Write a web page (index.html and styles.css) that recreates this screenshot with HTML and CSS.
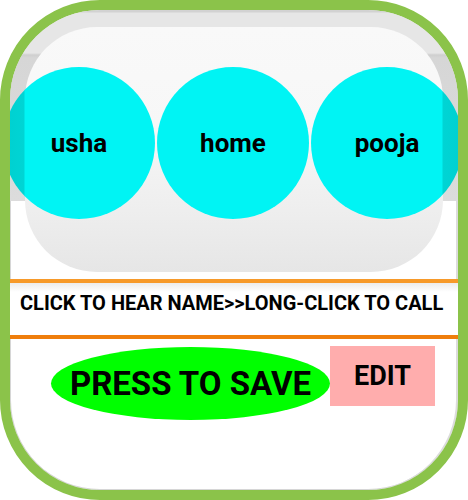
FILE: index.html
```html
<!DOCTYPE html>
<html>
<head>
<meta charset="utf-8">
<link rel="stylesheet" href="styles.css">
</head>
<body>
<div class="frame">
  <div class="list">
    <div class="shell"></div>
    <div class="pill"></div>
    <div class="row">
      <div class="circle circle-first">usha</div>
      <div class="circle">home</div>
      <div class="circle circle-last">pooja</div>
    </div>
  </div>
  <div class="band">CLICK TO HEAR NAME&gt;&gt;LONG-CLICK TO CALL</div>
  <div class="actions">
    <div class="save">PRESS TO SAVE</div>
    <div class="edit">EDIT</div>
  </div>
</div>
</body>
</html>
```

FILE: styles.css
```css
html, body {
  margin: 0;
  padding: 0;
  background: #ffffff;
}
body {
  width: 468px;
  height: 500px;
  font-family: Roboto, "Liberation Sans", sans-serif;
  color: #000;
}
.frame {
  box-sizing: border-box;
  width: 468px;
  height: 500px;
  border: 10px solid #8bc34a;
  border-radius: 100px;
  overflow: hidden;
  background: #ffffff;
  box-shadow: inset 1px 0 0 #d6d6d6, inset -2px 0 0 #dcdcdc, inset 0 -1px 0 #d6d6d6;
}
.list {
  position: relative;
  height: 269px;
}
.shell {
  position: absolute;
  left: 0;
  right: 0;
  top: -1px;
  height: 192px;
  background: linear-gradient(to bottom, #d2d2d2 0, #d2d2d2 3px, #e6e6e6 4px, #e6e6e6 44px, #cfcfcf 46px, #d6d6d6 49px, #dcdcdc 100%);
}
.pill {
  position: absolute;
  left: 15px;
  right: 15px;
  top: 17px;
  height: 245px;
  border-radius: 72px;
  background: linear-gradient(to bottom, #f9f9f9 0, #f7f7f7 40%, #eeeeee 75%, #e6e6e6 100%);
}
.row {
  position: relative;
  display: flex;
  gap: 2px;
  margin-left: -7px;
  padding-top: 57px;
}
.circle {
  flex: 0 0 152px;
  width: 152px;
  height: 152px;
  border-radius: 50%;
  background: #00f4f4;
  display: flex;
  align-items: center;
  justify-content: center;
  font-size: 26px;
  font-weight: 700;
  color: #000;
}
.circle-first {
  background: linear-gradient(to right, #00d0d0 0, #00d4d4 21px, #00f4f4 22px);
}
.circle-last {
  background: linear-gradient(to right, #00f4f4 131px, #00d4d4 132px, #00d0d0 100%);
}
.band {
  box-sizing: border-box;
  height: 60px;
  border-top: 4px solid #f79a2a;
  border-bottom: 4px solid #ef7e0c;
  background: linear-gradient(to bottom, #ececec 0, #ffffff 9px, #ffffff 100%);
  padding: 8px 0 0 10px;
  font-size: 20px;
  font-weight: 700;
  white-space: nowrap;
}
.actions {
  display: flex;
  align-items: flex-start;
  padding: 7px 0 0 41px;
}
.save {
  width: 279px;
  height: 73px;
  margin-top: 1px;
  border-radius: 50%;
  background: #00ff00;
  display: flex;
  align-items: center;
  justify-content: center;
  font-size: 33px;
  font-weight: 700;
}
.edit {
  width: 105px;
  height: 60px;
  background: #ffadad;
  display: flex;
  align-items: center;
  justify-content: center;
  font-size: 27px;
  font-weight: 700;
}
```
